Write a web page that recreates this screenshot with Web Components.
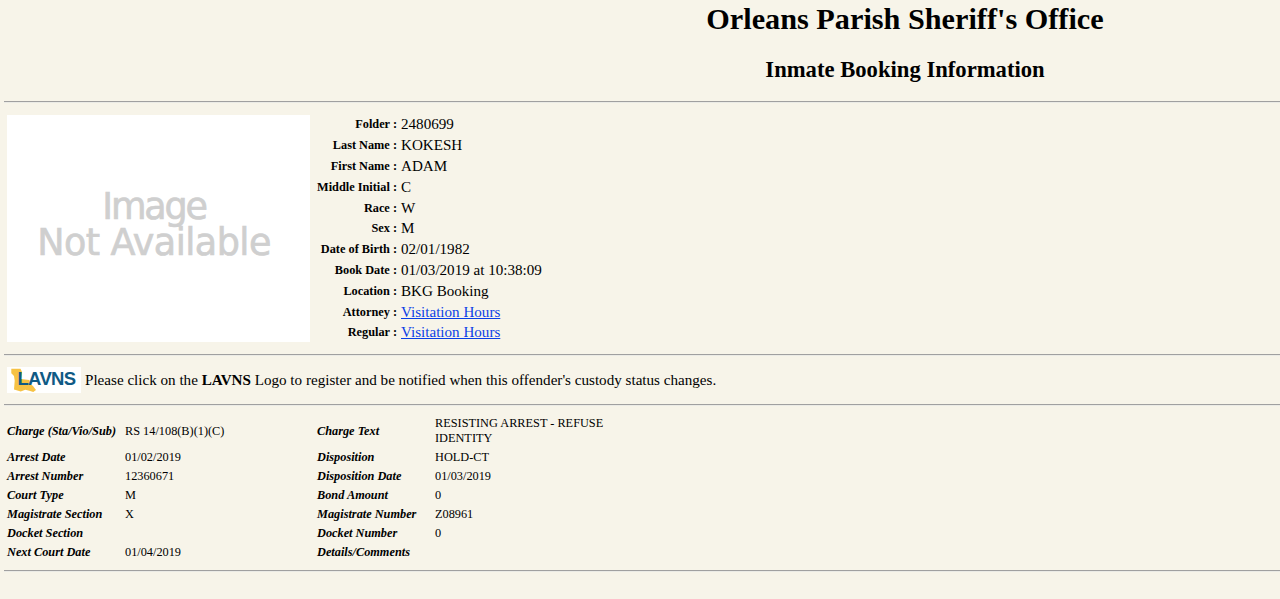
<!DOCTYPE html>
<html>
<head>
<meta charset="utf-8">
<title>Inmate Booking Information</title>
<style>
html, body { margin: 0; background: #f7f4e9; }
body { font-family: "Liberation Serif", "Times New Roman", serif; color: #000; }
</style>
</head>
<body>
<booking-page>
    <page-header></page-header>
    <page-rule></page-rule>
    <booking-summary>
        <detail-row label="Folder">2480699</detail-row>
        <detail-row label="Last Name">KOKESH</detail-row>
        <detail-row label="First Name">ADAM</detail-row>
        <detail-row label="Middle Initial">C</detail-row>
        <detail-row label="Race">W</detail-row>
        <detail-row label="Sex">M</detail-row>
        <detail-row label="Date of Birth">02/01/1982</detail-row>
        <detail-row label="Book Date">01/03/2019 at 10:38:09</detail-row>
        <detail-row label="Location">BKG Booking</detail-row>
        <detail-row label="Attorney" href="#">Visitation Hours</detail-row>
        <detail-row label="Regular" href="#">Visitation Hours</detail-row>
    </booking-summary>
    <page-rule></page-rule>
    <lavns-notice></lavns-notice>
    <page-rule></page-rule>
    <charge-table></charge-table>
    <page-rule></page-rule>
</booking-page>

<script>
class BookingPage extends HTMLElement {
    constructor() {
        super();
        this.attachShadow({mode: "open"}).innerHTML = `
            <style>
            :host { display: block; padding: 0 0 26px; }
            </style>
            <slot></slot>
        `;
    }
}

class PageHeader extends HTMLElement {
    constructor() {
        super();
        this.attachShadow({mode: "open"}).innerHTML = `
            <style>
            :host { display: block; height: 101px; box-sizing: border-box; padding: 2px 0 0 530px; text-align: center; }
            h1 { margin: 0; font-size: 30.25px; line-height: 34px; }
            h2 { margin: 21px 0 0; font-size: 22.65px; line-height: 25px; }
            </style>
            <h1>Orleans Parish Sheriff's Office</h1>
            <h2>Inmate Booking Information</h2>
        `;
    }
}

class PageRule extends HTMLElement {
    constructor() {
        super();
        this.attachShadow({mode: "open"}).innerHTML = `
            <style>
            :host { display: block; margin-left: 4px; border-top: 1px solid #a0a0a0; border-bottom: 1px solid #ebebe6; }
            </style>
        `;
    }
}

class BookingSummary extends HTMLElement {
    constructor() {
        super();
        this.attachShadow({mode: "open"}).innerHTML = `
            <style>
            :host { display: flex; padding: 12px 0 12px 7px; gap: 7px; }
            .photo {
                width: 303px; height: 227px; background: #fff; color: #cfcfcf; flex: none;
                font: 36.5px/36px "DejaVu Sans", sans-serif; -webkit-text-stroke: 0.7px #cfcfcf;
                letter-spacing: -0.55px;
                display: flex; align-items: center; justify-content: center; text-align: center;
            }
            .photo div { padding: 0 9px 7px 0; }
            .photo span { letter-spacing: -2.2px; }
            .rows { display: flex; flex-direction: column; height: 227px; padding-top: 0.5px; margin-top: -1px; }
            </style>
            <div class="photo"><div><span>Image</span><br>Not Available</div></div>
            <div class="rows"><slot></slot></div>
        `;
    }
}

class DetailRow extends HTMLElement {
    constructor() {
        super();
        const label = this.getAttribute("label");
        const href = this.getAttribute("href");
        this.attachShadow({mode: "open"}).innerHTML = `
            <style>
            :host { display: grid; grid-template-columns: 80px auto; column-gap: 4px; height: 20.8px; flex: none; align-items: center; }
            b { font-size: 12.3px; text-align: right; white-space: nowrap; }
            span { font-size: 15.1px; white-space: nowrap; }
            a { color: #0b3fe6; }
            </style>
            <b>${label} :</b>
            <span>${href ? `<a href="${href}"><slot></slot></a>` : "<slot></slot>"}</span>
        `;
    }
}

class LavnsNotice extends HTMLElement {
    constructor() {
        super();
        this.attachShadow({mode: "open"}).innerHTML = `
            <style>
            :host { display: flex; align-items: center; gap: 4px; height: 48px; padding-left: 7px; font-size: 15.12px; }
            .logo { position: relative; display: block; width: 74px; height: 26px; background: #fff; flex: none; }
            svg { position: absolute; left: 3px; top: 1px; }
            .name {
                position: absolute; left: 10.5px; top: -1px; font: bold 18.5px/26px "Liberation Sans", sans-serif;
                color: #0f5a85; letter-spacing: -0.7px;
            }
            </style>
            <a class="logo">
                <svg width="28" height="25" viewBox="0 0 28 25"><path fill="#f6c244" d="M1.3 .7H10.5L12 4 11.5 7.7 11 11 19.3 12 20.5 16 23 18 26 22 23.3 24 19.3 22.7 15.3 21.8 10.7 23.5 4 21.5 4.7 12.7 4 8 1.3 5.3z"/></svg>
                <span class="name">LAVNS</span>
            </a>
            <div>Please click on the <b>LAVNS</b> Logo to register and be notified when this offender's custody status changes.</div>
        `;
    }
}

class ChargeTable extends HTMLElement {
    constructor() {
        super();
        const rows = [
            ["Arrest Date", "01/02/2019", "Disposition", "HOLD-CT"],
            ["Arrest Number", "12360671", "Disposition Date", "01/03/2019"],
            ["Court Type", "M", "Bond Amount", "0"],
            ["Magistrate Section", "X", "Magistrate Number", "Z08961"],
            ["Docket Section", "", "Docket Number", "0"],
            ["Next Court Date", "01/04/2019", "Details/Comments", ""]
        ];
        const cells = rows.map(r => `
            <i>${r[0]}</i><span>${r[1]}</span><i>${r[2]}</i><span>${r[3]}</span>
        `).join("");
        this.attachShadow({mode: "open"}).innerHTML = `
            <style>
            :host {
                display: grid; grid-template-columns: 118px 192px 118px 180px;
                grid-template-rows: 34px; grid-auto-rows: 19px;
                align-items: center; padding: 8px 0 8px 7px; font-size: 12.3px;
            }
            i { font-weight: bold; white-space: nowrap; }
            .tall { line-height: 15px; }
            </style>
            <i class="tall">Charge (Sta/Vio/Sub)</i>
            <span class="tall">RS 14/108(B)(1)(C)</span>
            <i class="tall">Charge Text</i>
            <span class="tall">RESISTING ARREST - REFUSE IDENTITY</span>
            ${cells}
        `;
    }
}

customElements.define("booking-page", BookingPage);
customElements.define("page-header", PageHeader);
customElements.define("page-rule", PageRule);
customElements.define("booking-summary", BookingSummary);
customElements.define("detail-row", DetailRow);
customElements.define("lavns-notice", LavnsNotice);
customElements.define("charge-table", ChargeTable);
</script>
</body>
</html>
